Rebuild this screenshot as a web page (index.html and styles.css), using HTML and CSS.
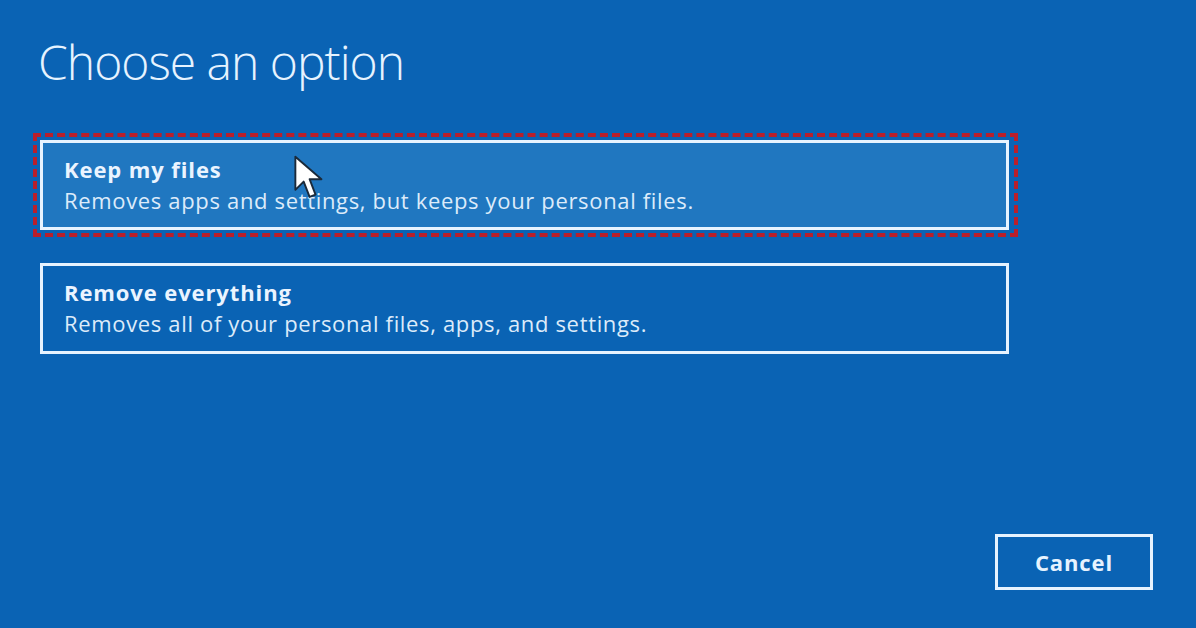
FILE: index.html
```html
<!DOCTYPE html>
<html>
<head>
<meta charset="utf-8">
<link rel="stylesheet" href="styles.css">
</head>
<body>
<div class="screen">
  <h1 class="title">Choose an option</h1>
  <div class="options">
    <div class="highlight">
      <div class="option selected">
        <div class="opt-title">Keep my files</div>
        <div class="opt-desc">Removes apps and settings, but keeps your personal files.</div>
        <svg class="cursor" width="32" height="48" viewBox="0 0 27 40">
          <path d="M2 2 L2 30 L9 23 L14 36 L19 34 L14 21 L24 21 Z" fill="#ffffff" stroke="#1b2a3a" stroke-width="1.6" stroke-linejoin="round"/>
        </svg>
      </div>
    </div>
    <div class="option plain">
      <div class="opt-title">Remove everything</div>
      <div class="opt-desc">Removes all of your personal files, apps, and settings.</div>
    </div>
  </div>
  <div class="footer">
    <div class="btn">Cancel</div>
  </div>
</div>
</body>
</html>
```
FILE: styles.css
```css
html, body {
  margin: 0;
  padding: 0;
}
body {
  background: #0a63b4;
  font-family: "Open Sans", "Noto Sans", sans-serif;
  color: #eaf4ff;
}
.screen {
  width: 1196px;
  height: 628px;
  box-sizing: border-box;
  padding: 30px 0 0 38px;
  display: flex;
  flex-direction: column;
}
.title {
  margin: 0;
  font-weight: 300;
  font-size: 48px;
  line-height: 64px;
  color: #e6f3ff;
  letter-spacing: -1px;
}
.options {
  margin-top: 39px;
  display: flex;
  flex-direction: column;
  gap: 26px;
}
.highlight {
  width: 985px;
  margin-left: -5px;
  border: 4px dashed #b91f2b;
  box-sizing: border-box;
  padding: 3px;
}
.option {
  position: relative;
  box-sizing: border-box;
  width: 969px;
  border: 3px solid #e6f3ff;
  padding: 11px 21px 0;
}
.option.selected {
  height: 90px;
  background: #2077c0;
}
.option.plain {
  height: 91px;
  margin-left: 2px;
  background: #0a63b4;
}
.opt-title {
  font-weight: 700;
  font-size: 22px;
  line-height: 30px;
  letter-spacing: 0.9px;
}
.opt-desc {
  font-size: 22px;
  line-height: 33px;
  letter-spacing: 0.66px;
  color: #dcebfa;
}
.cursor {
  position: absolute;
  left: 250px;
  top: 11px;
}
.footer {
  margin-top: auto;
  margin-bottom: 38px;
  display: flex;
  justify-content: flex-end;
  padding-right: 43px;
}
.btn {
  width: 158px;
  height: 56px;
  box-sizing: border-box;
  border: 3px solid #e6f3ff;
  display: flex;
  align-items: center;
  justify-content: center;
  font-size: 22px;
  font-weight: 700;
  letter-spacing: 0.9px;
  color: #e6f3ff;
}
```
